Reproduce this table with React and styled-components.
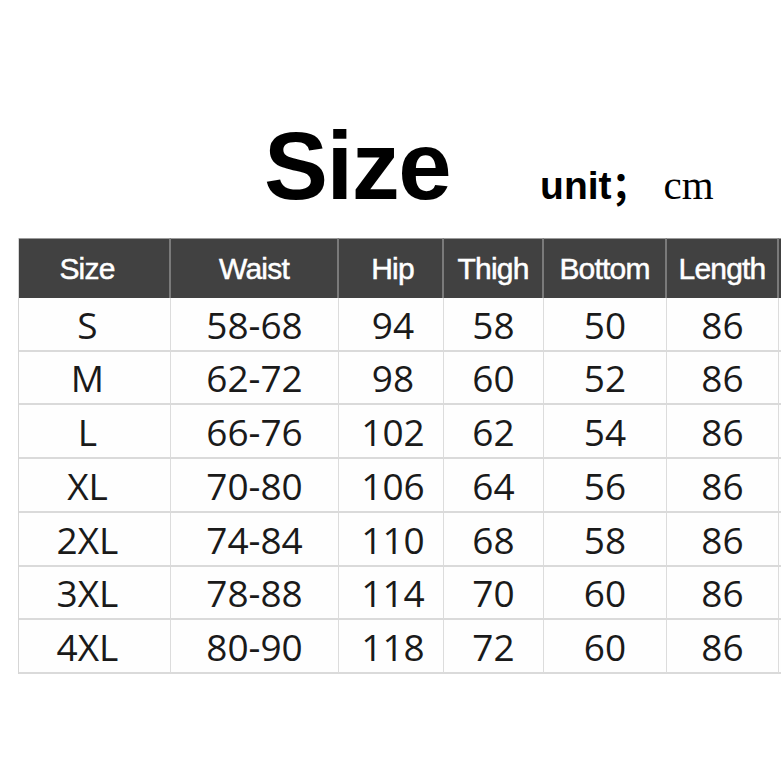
import React from "react";
import styled, { createGlobalStyle } from "styled-components";

const GlobalStyle = createGlobalStyle`
  html, body {
    margin: 0;
    padding: 0;
    background: #fff;
  }
  body {
    width: 781px;
    height: 781px;
    overflow: hidden;
  }
`;

const columns = [
  { key: "size", label: "Size", width: 152, shift: -14 },
  { key: "waist", label: "Waist", width: 168, shift: 0 },
  { key: "hip", label: "Hip", width: 105, shift: 4 },
  { key: "thigh", label: "Thigh", width: 100, shift: 0 },
  { key: "bottom", label: "Bottom", width: 123, shift: 0 },
  { key: "length", label: "Length", width: 112, shift: 0 },
  { key: "extra", label: "", width: 120, shift: 0 }
];

const rows = [
  ["S", "58-68", "94", "58", "50", "86"],
  ["M", "62-72", "98", "60", "52", "86"],
  ["L", "66-76", "102", "62", "54", "86"],
  ["XL", "70-80", "106", "64", "56", "86"],
  ["2XL", "74-84", "110", "68", "58", "86"],
  ["3XL", "78-88", "114", "70", "60", "86"],
  ["4XL", "80-90", "118", "72", "60", "86"]
];

// Styled Components
const Page = styled.div`
  width: 781px;
  height: 781px;
  overflow: hidden;
  background: #fff;
  padding-top: 118px;
  box-sizing: border-box;
`;

const TitleRow = styled.div`
  display: flex;
  align-items: baseline;
  padding-left: 264px;
  height: 120px;
`;

const Title = styled.h1`
  margin: 0;
  font-family: "Liberation Sans", Arial, sans-serif;
  font-weight: 700;
  font-size: 96px;
  line-height: 96px;
  letter-spacing: -1.5px;
  color: #000;
`;

const Unit = styled.span`
  margin-left: 90px;
  font-family: "Liberation Sans", Arial, sans-serif;
  font-weight: 700;
  font-size: 39px;
  color: #000;
`;

const Semi = styled.span`
  font-family: "Noto Sans CJK SC", sans-serif;
  font-weight: 700;
  font-size: 38px;
`;

const Cm = styled.span`
  margin-left: 14px;
  font-family: "Liberation Serif", serif;
  font-weight: 400;
  font-size: 41px;
`;

const TableWrap = styled.div`
  padding-left: 18px;
`;

const Grid = styled.div`
  display: grid;
  grid-template-columns: ${p => p.$cols};
  width: max-content;
  border-left: 1px solid #d6d6d6;
`;

const HeadCell = styled.div`
  height: 60px;
  box-sizing: border-box;
  background: #414141;
  border-right: 2px solid #7a7a7a;
  border-top: 1px solid #9a9a9a;
  display: flex;
  align-items: center;
  justify-content: center;
  padding-left: ${p => (p.$shift > 0 ? p.$shift : 0)}px;
  padding-right: ${p => (p.$shift < 0 ? -p.$shift : 0)}px;
  font-family: "Liberation Sans", Arial, sans-serif;
  font-size: 30px;
  letter-spacing: -0.8px;
  color: #fff;
  -webkit-text-stroke: 0.5px #fff;
`;

const Cell = styled.div`
  height: ${p => p.$h}px;
  box-sizing: border-box;
  background: #fefefe;
  border-right: 1px solid #dcdcdc;
  border-bottom: 2px solid #dadada;
  display: flex;
  align-items: center;
  justify-content: center;
  padding-left: ${p => (p.$shift > 0 ? p.$shift : 0)}px;
  padding-right: ${p => (p.$shift < 0 ? -p.$shift : 0)}px;
  font-family: "Open Sans", "Noto Sans", sans-serif;
  font-size: 37px;
  color: #1a1a1a;
`;

const rowHeights = [54, 53, 54, 54, 54, 53, 54];

const SizeChart = () => (
  <TableWrap>
    <Grid $cols={columns.map(c => `${c.width}px`).join(" ")}>
      {columns.map(c => (
        <HeadCell key={c.key} $shift={c.shift}>
          {c.label}
        </HeadCell>
      ))}
      {rows.map((row, i) =>
        columns.map((c, j) => (
          <Cell key={`${i}-${c.key}`} $h={rowHeights[i]} $shift={c.shift}>
            {row[j] || ""}
          </Cell>
        ))
      )}
    </Grid>
  </TableWrap>
);

export default function App() {
  return (
    <Page>
      <GlobalStyle />
      <TitleRow>
        <Title>Size</Title>
        <Unit>
          unit<Semi>；</Semi>
          <Cm>cm</Cm>
        </Unit>
      </TitleRow>
      <SizeChart />
    </Page>
  );
}
